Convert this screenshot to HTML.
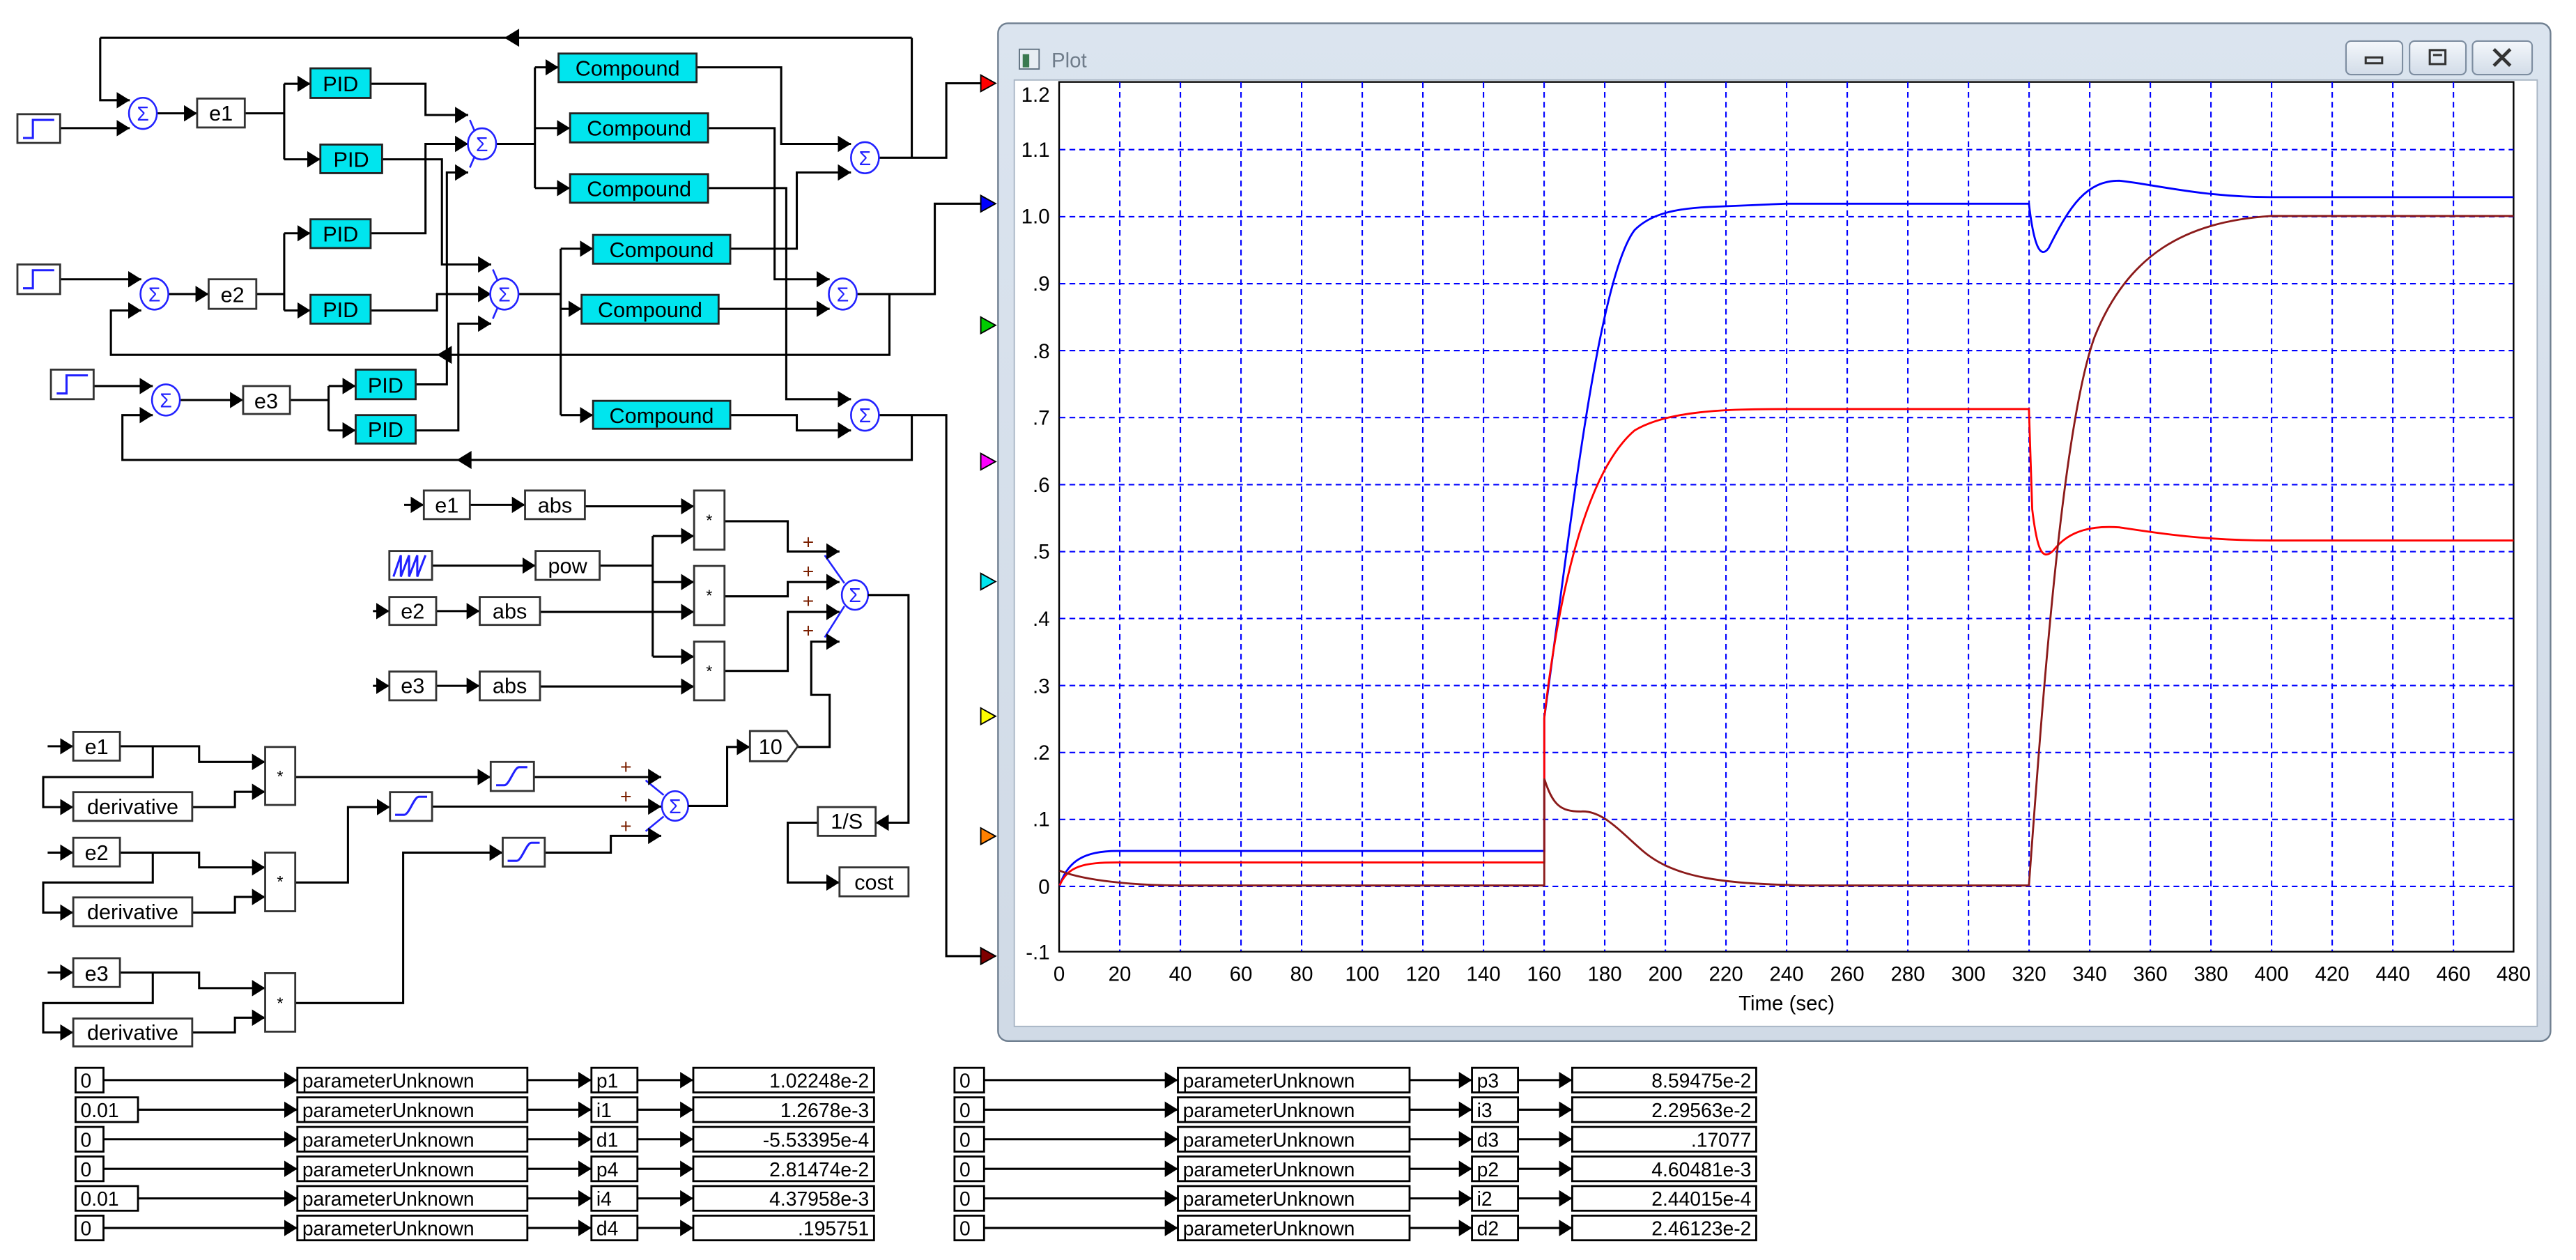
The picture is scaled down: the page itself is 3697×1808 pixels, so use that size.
<!DOCTYPE html>
<html><head><meta charset="utf-8"><style>
html,body{margin:0;padding:0;background:#fff;}
svg{display:block;}
text{font-family:"Liberation Sans",Arial,sans-serif;}
</style></head><body>
<svg width="3697" height="1808" viewBox="0 0 1568 767" preserveAspectRatio="none" xmlns="http://www.w3.org/2000/svg">
<defs>
<marker id="a" viewBox="0 0 8 10" refX="8" refY="5" markerWidth="8" markerHeight="10" markerUnits="userSpaceOnUse" orient="auto"><path d="M0,0 L8,5 L0,10z" fill="#000"/></marker>
<linearGradient id="fr" x1="0" y1="0" x2="0" y2="1"><stop offset="0" stop-color="#dbe4ef"/><stop offset="1" stop-color="#d0dae6"/></linearGradient>
<linearGradient id="bt" x1="0" y1="0" x2="0" y2="1"><stop offset="0" stop-color="#f4f7fb"/><stop offset="1" stop-color="#d2dce8"/></linearGradient>
</defs>
<rect width="1568" height="767" fill="#fff"/>

<g fill="none" stroke="#000" stroke-width="1.3">
<path d="M61,23 H555"/>
<path d="M61,23 V61 H79" marker-end="url(#a)"/>
<path d="M36.5,78 H79" marker-end="url(#a)"/>
<path d="M95.5,69 H120" marker-end="url(#a)"/>
<path d="M149,69 H173 M173,51 V97"/>
<path d="M173,51 H189" marker-end="url(#a)"/>
<path d="M173,97 H195" marker-end="url(#a)"/>
<path d="M225.6,51 H259 V70 H285" marker-end="url(#a)"/>
<path d="M232.6,97 H269 V161 H299" marker-end="url(#a)"/>
<path d="M225.6,142 H259 V87.6 H285" marker-end="url(#a)"/>
<path d="M225.6,189 H266 V179 H299" marker-end="url(#a)"/>
<path d="M253,234 H272 V105 H285" marker-end="url(#a)"/>
<path d="M253,262 H279 V197 H299" marker-end="url(#a)"/>
<path d="M302,87.6 H325.6 M325.6,41 V114.5"/>
<path d="M325.6,41 H340" marker-end="url(#a)"/>
<path d="M325.6,78 H347" marker-end="url(#a)"/>
<path d="M325.6,114.5 H347" marker-end="url(#a)"/>
<path d="M316,179 H341.3 M341.3,151.4 V252.7"/>
<path d="M341.3,151.4 H361" marker-end="url(#a)"/>
<path d="M341.3,188 H354" marker-end="url(#a)"/>
<path d="M341.3,252.7 H361" marker-end="url(#a)"/>
<path d="M424,41 H475.5 V87.6 H518" marker-end="url(#a)"/>
<path d="M431,78 H471.5 V170 H505" marker-end="url(#a)"/>
<path d="M431,114.5 H478.6 V243 H518" marker-end="url(#a)"/>
<path d="M444.5,151.4 H485 V105 H518" marker-end="url(#a)"/>
<path d="M437.4,188 H505" marker-end="url(#a)"/>
<path d="M444.5,252.7 H485 V262 H518" marker-end="url(#a)"/>
<path d="M535,96 H576 V50.7 H598"/>
<path d="M555,96 V23"/>
<path d="M521.5,179 H569 V124 H598"/>
<path d="M541.4,179 V216 H67.5 V189 H86" marker-end="url(#a)"/>
<path d="M535,252.7 H576 V582 H598"/>
<path d="M555,252.7 V280 H74.5 V252.7 H93" marker-end="url(#a)"/>
<path d="M36.5,170 H86" marker-end="url(#a)"/>
<path d="M102.5,179 H127" marker-end="url(#a)"/>
<path d="M156,179 H173 M173,142 V189"/>
<path d="M173,142 H189" marker-end="url(#a)"/>
<path d="M173,189 H189" marker-end="url(#a)"/>
<path d="M57,235 H93" marker-end="url(#a)"/>
<path d="M109.5,243.5 H148" marker-end="url(#a)"/>
<path d="M176.5,243.5 H200 M200,235 V262"/>
<path d="M200,235 H216.5" marker-end="url(#a)"/>
<path d="M200,262 H216.5" marker-end="url(#a)"/>
</g>
<g fill="#000">
<polygon points="307,23 316,17.5 316,28.5"/>
<polygon points="266,216 275,210.5 275,221.5"/>
<polygon points="278,280 287,274.5 287,285.5"/>
</g>

<g stroke="#333" stroke-width="1.2" fill="#fff">
<rect x="10.6" y="69.5" width="26" height="17.5"/>
<rect x="10.6" y="161" width="26" height="18"/>
<rect x="31" y="225" width="26" height="18"/>
<rect x="120" y="60" width="29" height="17.6"/>
<rect x="127" y="170" width="29" height="18"/>
<rect x="148" y="235" width="28.5" height="17"/>
</g>
<g fill="none" stroke="#2020ff" stroke-width="1.3">
<path d="M14,84 H20 V73 H33"/>
<path d="M14,175.5 H20 V164.5 H33"/>
<path d="M34.5,239.5 H40.5 V228.5 H53.5"/>
</g>
<g stroke="#222" stroke-width="1.2" fill="#00e5ee">
<rect x="189" y="41.6" width="36.6" height="18"/>
<rect x="195" y="88" width="37.6" height="17.4"/>
<rect x="189" y="133.5" width="36.6" height="17.5"/>
<rect x="189" y="179.5" width="36.6" height="17.5"/>
<rect x="216.5" y="225" width="36.5" height="18"/>
<rect x="216.5" y="252.7" width="36.5" height="17.3"/>
<rect x="340" y="32.6" width="84" height="17.4"/>
<rect x="347" y="69" width="84" height="17.7"/>
<rect x="347" y="106" width="84" height="17.4"/>
<rect x="361" y="143" width="83.5" height="17.5"/>
<rect x="354" y="179.5" width="83.4" height="17.5"/>
<rect x="361" y="244" width="83.5" height="17"/>
</g>
<g font-size="13" text-anchor="middle" fill="#000">
<text x="134.5" y="73.5">e1</text>
<text x="141.5" y="184">e2</text>
<text x="162" y="248.5">e3</text>
<text x="207.3" y="55.5">PID</text>
<text x="213.8" y="101.5">PID</text>
<text x="207.3" y="147">PID</text>
<text x="207.3" y="193">PID</text>
<text x="234.7" y="239">PID</text>
<text x="234.7" y="266">PID</text>
<text x="382" y="46">Compound</text>
<text x="389" y="82.5">Compound</text>
<text x="389" y="119.5">Compound</text>
<text x="402.7" y="156.5">Compound</text>
<text x="395.7" y="193">Compound</text>
<text x="402.7" y="257.5">Compound</text>
</g>
<g fill="#fff" stroke="#2222ff" stroke-width="1.1">
<ellipse cx="87" cy="69" rx="8.5" ry="9.5"/>
<ellipse cx="94" cy="179" rx="8.5" ry="9.5"/>
<ellipse cx="101" cy="243.5" rx="8.5" ry="9.5"/>
<ellipse cx="293.4" cy="87.6" rx="8.6" ry="9.5"/>
<ellipse cx="307" cy="179" rx="8.6" ry="9.5"/>
<ellipse cx="526.5" cy="96" rx="8.5" ry="9.5"/>
<ellipse cx="513" cy="179" rx="8.5" ry="9.5"/>
<ellipse cx="526.5" cy="252.7" rx="8.5" ry="9.5"/>
<ellipse cx="520.4" cy="362.2" rx="8" ry="9"/>
<ellipse cx="410.9" cy="490.6" rx="8" ry="9"/>
<path d="M286,73 L289,80 M286,102 L289,95 M300,164 L303,171 M300,194 L303,187 M502,338 L514,355 M502,388 L514,369 M393,475 L404,484 M393,506 L404,497" fill="none"/>
</g>
<g font-size="12" fill="#2222ff" text-anchor="middle">
<text x="87" y="73.5">Σ</text><text x="94" y="183.5">Σ</text><text x="101" y="248">Σ</text>
<text x="293.4" y="92">Σ</text><text x="307" y="183.5">Σ</text><text x="526.5" y="100.5">Σ</text>
<text x="513" y="183.5">Σ</text><text x="526.5" y="257">Σ</text><text x="520.4" y="366.5">Σ</text><text x="410.9" y="495">Σ</text>
</g>

<g stroke="#000" stroke-width="0.8">
<polygon points="597,45.7 606,50.7 597,55.7" fill="#ff0000"/>
<polygon points="597,119 606,124 597,129" fill="#0000ff"/>
<polygon points="597,193 606,198 597,203" fill="#00cc00"/>
<polygon points="597,276 606,281 597,286" fill="#ff00ff"/>
<polygon points="597,349 606,354 597,359" fill="#00e5ee"/>
<polygon points="597,431 606,436 597,441" fill="#ffff00"/>
<polygon points="597,504 606,509 597,514" fill="#ff8000"/>
<polygon points="597,577 606,582 597,587" fill="#800000"/>
</g>

<g fill="none" stroke="#000" stroke-width="1.3">
<path d="M246,307.3 H258" marker-end="url(#a)"/>
<path d="M286,307.3 H319.6" marker-end="url(#a)"/>
<path d="M356,308.2 H422.5" marker-end="url(#a)"/>
<path d="M263,344.3 H326" marker-end="url(#a)"/>
<path d="M365,344.3 H397.3 M397.3,326.3 V399.7"/>
<path d="M397.3,326.3 H422.5" marker-end="url(#a)"/>
<path d="M397.3,354.3 H422.5" marker-end="url(#a)"/>
<path d="M397.3,399.7 H422.5" marker-end="url(#a)"/>
<path d="M227,372 H237" marker-end="url(#a)"/>
<path d="M265.5,372 H292" marker-end="url(#a)"/>
<path d="M328.7,372.5 H422.5" marker-end="url(#a)"/>
<path d="M227,417.5 H237" marker-end="url(#a)"/>
<path d="M265.5,417.5 H292" marker-end="url(#a)"/>
<path d="M328.7,417.9 H422.5" marker-end="url(#a)"/>
<path d="M441,317.3 H479.5 V335.7 H511" marker-end="url(#a)"/>
<path d="M441,363 H479.5 V354.3 H511" marker-end="url(#a)"/>
<path d="M441,408.4 H479.5 V372.5 H511" marker-end="url(#a)"/>
<path d="M485.7,454.7 H505 V423 H493.8 V390.6 H511" marker-end="url(#a)"/>
<path d="M528.4,362.2 H553 V500.8 H533" marker-end="url(#a)"/>
<path d="M497.8,500.8 H479.5 V537.2 H511" marker-end="url(#a)"/>
<path d="M29,454.3 H44.6" marker-end="url(#a)"/>
<path d="M73,454.3 H121.2 V463.8 H161.4" marker-end="url(#a)"/>
<path d="M93,454.3 V473 H26.3 V491.3 H44.6" marker-end="url(#a)"/>
<path d="M117,491.3 H143 V482 H161.4" marker-end="url(#a)"/>
<path d="M179.7,473 H298.7" marker-end="url(#a)"/>
<path d="M325,473 H402.5" marker-end="url(#a)"/>
<path d="M29,519 H44.6" marker-end="url(#a)"/>
<path d="M73,519 H121.2 V528 H161.4" marker-end="url(#a)"/>
<path d="M93,519 V537.2 H26.3 V555.5 H44.6" marker-end="url(#a)"/>
<path d="M117,555.5 H143 V546 H161.4" marker-end="url(#a)"/>
<path d="M179.7,537.2 H211.8 V491.3 H237.4" marker-end="url(#a)"/>
<path d="M263,491 H402.5" marker-end="url(#a)"/>
<path d="M29,592 H44.6" marker-end="url(#a)"/>
<path d="M73,592 H121.2 V601.5 H161.4" marker-end="url(#a)"/>
<path d="M93,592 V610.6 H26.3 V628.5 H44.6" marker-end="url(#a)"/>
<path d="M117,628.5 H143 V619.5 H161.4" marker-end="url(#a)"/>
<path d="M179.7,610.6 H245.4 V519 H306" marker-end="url(#a)"/>
<path d="M331.6,519 H371.8 V508.8 H402.5" marker-end="url(#a)"/>
<path d="M419,490.6 H442.6 V454.7 H456.5" marker-end="url(#a)"/>
</g>
<g stroke="#333" stroke-width="1.2" fill="#fff">
<rect x="258" y="298.6" width="28" height="17.4"/>
<rect x="319.6" y="298.6" width="36.4" height="17.4"/>
<rect x="237" y="335.4" width="26" height="17.6"/>
<rect x="326" y="335.4" width="39" height="17.6"/>
<rect x="237" y="363.4" width="28.5" height="17"/>
<rect x="292" y="363.4" width="36.7" height="17"/>
<rect x="237" y="408.8" width="28.5" height="17.5"/>
<rect x="292" y="408.8" width="36.7" height="17.5"/>
<rect x="422.5" y="298.6" width="18.5" height="36"/>
<rect x="422.5" y="344.5" width="18.5" height="36"/>
<rect x="422.5" y="390.6" width="18.5" height="35.7"/>
<polygon points="456.5,445 479,445 485.7,454.2 479,463.4 456.5,463.4"/>
<rect x="497.8" y="491.3" width="35.2" height="17.5"/>
<rect x="511" y="528" width="42" height="17.6"/>
<rect x="44.6" y="445.6" width="28.4" height="17.4"/>
<rect x="44.6" y="482.2" width="72.4" height="17.5"/>
<rect x="161.4" y="454.7" width="18.3" height="35.3"/>
<rect x="298.7" y="463.8" width="26.3" height="17.7"/>
<rect x="44.6" y="510" width="28.4" height="17.4"/>
<rect x="44.6" y="546.3" width="72.4" height="17.5"/>
<rect x="161.4" y="519" width="18.3" height="35.7"/>
<rect x="237.4" y="482.2" width="25.6" height="17.5"/>
<rect x="44.6" y="583.3" width="28.4" height="17.5"/>
<rect x="44.6" y="620" width="72.4" height="17"/>
<rect x="161.4" y="592.4" width="18.3" height="35.6"/>
<rect x="306" y="510" width="25.6" height="17.5"/>
</g>
<g fill="none" stroke="#2020ff" stroke-width="1.3">
<path d="M239.5,351 L244,338 V351 L249,338 V351 L254,338 V351 L259,338"/>
<path d="M302,478 H307 C310,478 313,467 316,467 H321"/>
<path d="M240.5,496 H246 C249,496 252,485 255,485 H260"/>
<path d="M309,524 H314.5 C317.5,524 320.5,513 323.5,513 H328.5"/>
</g>
<g font-size="13" text-anchor="middle" fill="#000">
<text x="272" y="312">e1</text>
<text x="337.8" y="312">abs</text>
<text x="345.5" y="349">pow</text>
<text x="251.2" y="376.5">e2</text>
<text x="310.3" y="376.5">abs</text>
<text x="251.2" y="422">e3</text>
<text x="310.3" y="422">abs</text>
<text x="469" y="459">10</text>
<text x="515.4" y="504.5">1/S</text>
<text x="532" y="541.5">cost</text>
<text x="58.8" y="459">e1</text>
<text x="80.8" y="495.5">derivative</text>
<text x="58.8" y="523.5">e2</text>
<text x="80.8" y="559.5">derivative</text>
<text x="58.8" y="597">e3</text>
<text x="80.8" y="633">derivative</text>
</g>
<g font-size="10" text-anchor="middle" fill="#000">
<text x="431.7" y="320">*</text><text x="431.7" y="366">*</text><text x="431.7" y="412">*</text>
<text x="170.5" y="476">*</text><text x="170.5" y="540">*</text><text x="170.5" y="614">*</text>
</g>
<g font-size="12" fill="#7a1f00" text-anchor="middle">
<text x="492" y="334">+</text><text x="492" y="352">+</text><text x="492" y="370">+</text><text x="492" y="388">+</text>
<text x="381" y="471">+</text><text x="381" y="489">+</text><text x="381" y="507">+</text>
</g>

<g fill="none" stroke="#000" stroke-width="1.3">
<path d="M63,657.5 H181" marker-end="url(#a)"/><path d="M84,675.5 H181" marker-end="url(#a)"/><path d="M63,693.5 H181" marker-end="url(#a)"/>
<path d="M63,711.5 H181" marker-end="url(#a)"/><path d="M84,729.5 H181" marker-end="url(#a)"/><path d="M63,747.5 H181" marker-end="url(#a)"/>
<path d="M321,657.5 H360" marker-end="url(#a)"/><path d="M321,675.5 H360" marker-end="url(#a)"/><path d="M321,693.5 H360" marker-end="url(#a)"/>
<path d="M321,711.5 H360" marker-end="url(#a)"/><path d="M321,729.5 H360" marker-end="url(#a)"/><path d="M321,747.5 H360" marker-end="url(#a)"/>
<path d="M388,657.5 H422" marker-end="url(#a)"/><path d="M388,675.5 H422" marker-end="url(#a)"/><path d="M388,693.5 H422" marker-end="url(#a)"/>
<path d="M388,711.5 H422" marker-end="url(#a)"/><path d="M388,729.5 H422" marker-end="url(#a)"/><path d="M388,747.5 H422" marker-end="url(#a)"/>
<path d="M599,657.5 H717" marker-end="url(#a)"/><path d="M599,675.5 H717" marker-end="url(#a)"/><path d="M599,693.5 H717" marker-end="url(#a)"/>
<path d="M599,711.5 H717" marker-end="url(#a)"/><path d="M599,729.5 H717" marker-end="url(#a)"/><path d="M599,747.5 H717" marker-end="url(#a)"/>
<path d="M858,657.5 H896" marker-end="url(#a)"/><path d="M858,675.5 H896" marker-end="url(#a)"/><path d="M858,693.5 H896" marker-end="url(#a)"/>
<path d="M858,711.5 H896" marker-end="url(#a)"/><path d="M858,729.5 H896" marker-end="url(#a)"/><path d="M858,747.5 H896" marker-end="url(#a)"/>
<path d="M924,657.5 H957" marker-end="url(#a)"/><path d="M924,675.5 H957" marker-end="url(#a)"/><path d="M924,693.5 H957" marker-end="url(#a)"/>
<path d="M924,711.5 H957" marker-end="url(#a)"/><path d="M924,729.5 H957" marker-end="url(#a)"/><path d="M924,747.5 H957" marker-end="url(#a)"/>
</g>
<g stroke="#000" stroke-width="1.2" fill="#fff">
<rect x="46" y="650" width="17" height="15"/><rect x="46" y="668" width="38" height="15"/><rect x="46" y="686" width="17" height="15"/>
<rect x="46" y="704" width="17" height="15"/><rect x="46" y="722" width="38" height="15"/><rect x="46" y="740" width="17" height="15"/>
<rect x="181" y="650" width="140" height="15"/><rect x="181" y="668" width="140" height="15"/><rect x="181" y="686" width="140" height="15"/>
<rect x="181" y="704" width="140" height="15"/><rect x="181" y="722" width="140" height="15"/><rect x="181" y="740" width="140" height="15"/>
<rect x="360" y="650" width="28" height="15"/><rect x="360" y="668" width="28" height="15"/><rect x="360" y="686" width="28" height="15"/>
<rect x="360" y="704" width="28" height="15"/><rect x="360" y="722" width="28" height="15"/><rect x="360" y="740" width="28" height="15"/>
<rect x="422" y="650" width="110" height="15"/><rect x="422" y="668" width="110" height="15"/><rect x="422" y="686" width="110" height="15"/>
<rect x="422" y="704" width="110" height="15"/><rect x="422" y="722" width="110" height="15"/><rect x="422" y="740" width="110" height="15"/>
<rect x="581" y="650" width="18" height="15"/><rect x="581" y="668" width="18" height="15"/><rect x="581" y="686" width="18" height="15"/>
<rect x="581" y="704" width="18" height="15"/><rect x="581" y="722" width="18" height="15"/><rect x="581" y="740" width="18" height="15"/>
<rect x="717" y="650" width="141" height="15"/><rect x="717" y="668" width="141" height="15"/><rect x="717" y="686" width="141" height="15"/>
<rect x="717" y="704" width="141" height="15"/><rect x="717" y="722" width="141" height="15"/><rect x="717" y="740" width="141" height="15"/>
<rect x="896" y="650" width="28" height="15"/><rect x="896" y="668" width="28" height="15"/><rect x="896" y="686" width="28" height="15"/>
<rect x="896" y="704" width="28" height="15"/><rect x="896" y="722" width="28" height="15"/><rect x="896" y="740" width="28" height="15"/>
<rect x="957" y="650" width="112" height="15"/><rect x="957" y="668" width="112" height="15"/><rect x="957" y="686" width="112" height="15"/>
<rect x="957" y="704" width="112" height="15"/><rect x="957" y="722" width="112" height="15"/><rect x="957" y="740" width="112" height="15"/>
</g>
<g font-size="12" fill="#000">
<text x="49" y="662">0</text><text x="49" y="680">0.01</text><text x="49" y="698">0</text><text x="49" y="716">0</text><text x="49" y="734">0.01</text><text x="49" y="752">0</text>
<text x="184" y="662">parameterUnknown</text><text x="184" y="680">parameterUnknown</text><text x="184" y="698">parameterUnknown</text>
<text x="184" y="716">parameterUnknown</text><text x="184" y="734">parameterUnknown</text><text x="184" y="752">parameterUnknown</text>
<text x="363" y="662">p1</text><text x="363" y="680">i1</text><text x="363" y="698">d1</text><text x="363" y="716">p4</text><text x="363" y="734">i4</text><text x="363" y="752">d4</text>
<text x="584" y="662">0</text><text x="584" y="680">0</text><text x="584" y="698">0</text><text x="584" y="716">0</text><text x="584" y="734">0</text><text x="584" y="752">0</text>
<text x="720" y="662">parameterUnknown</text><text x="720" y="680">parameterUnknown</text><text x="720" y="698">parameterUnknown</text>
<text x="720" y="716">parameterUnknown</text><text x="720" y="734">parameterUnknown</text><text x="720" y="752">parameterUnknown</text>
<text x="899" y="662">p3</text><text x="899" y="680">i3</text><text x="899" y="698">d3</text><text x="899" y="716">p2</text><text x="899" y="734">i2</text><text x="899" y="752">d2</text>
</g>
<g font-size="12" fill="#000" text-anchor="end">
<text x="529" y="662">1.02248e-2</text><text x="529" y="680">1.2678e-3</text><text x="529" y="698">-5.53395e-4</text>
<text x="529" y="716">2.81474e-2</text><text x="529" y="734">4.37958e-3</text><text x="529" y="752">.195751</text>
<text x="1066" y="662">8.59475e-2</text><text x="1066" y="680">2.29563e-2</text><text x="1066" y="698">.17077</text>
<text x="1066" y="716">4.60481e-3</text><text x="1066" y="734">2.44015e-4</text><text x="1066" y="752">2.46123e-2</text>
</g>

<rect x="607.5" y="14.2" width="945" height="619.5" rx="6" fill="url(#fr)" stroke="#6f7f90" stroke-width="1"/>
<rect x="617.4" y="48.7" width="927" height="576.1" fill="#fff" stroke="#a8b5c4" stroke-width="0.8"/>
<rect x="620.5" y="30" width="12" height="12" fill="#e8eef3" stroke="#5f7080" stroke-width="0.8"/>
<rect x="622.5" y="33" width="4" height="8" fill="#3b7a50"/>
<text x="640" y="41" font-size="12.5" fill="#6f7c8a">Plot</text>
<g stroke="#7d8da0" stroke-width="0.9" fill="url(#bt)">
<rect x="1428" y="25" width="34.4" height="20.4" rx="3"/>
<rect x="1466.7" y="25" width="34.3" height="20.4" rx="3"/>
<rect x="1505" y="25" width="36.3" height="20.4" rx="3"/>
</g>
<g fill="none" stroke="#333" stroke-width="1.3">
<rect x="1440" y="35" width="10" height="3.5"/>
<rect x="1479" y="30.5" width="9.5" height="8.5"/>
<path d="M1481,33.5 H1486.5" />
<path d="M1518,30 L1528,40 M1528,30 L1518,40" stroke-width="2"/>
</g>

<rect x="644.7" y="49.9" width="885.3" height="529.4" fill="#fff" stroke="#000" stroke-width="1"/>
<g stroke="#0000ff" stroke-width="0.9" stroke-dasharray="3.5 2.5" fill="none">
<path d="M681.6,50 V579 M718.5,50 V579 M755.4,50 V579 M792.3,50 V579 M829.2,50 V579 M866.1,50 V579 M903,50 V579 M939.9,50 V579 M976.8,50 V579 M1013.7,50 V579 M1050.6,50 V579 M1087.5,50 V579 M1124.4,50 V579 M1161.3,50 V579 M1198.2,50 V579 M1235.1,50 V579 M1272,50 V579 M1308.9,50 V579 M1345.8,50 V579 M1382.7,50 V579 M1419.6,50 V579 M1456.5,50 V579 M1493.4,50 V579"/>
<path d="M645,539.6 H1530 M645,498.8 H1530 M645,458.1 H1530 M645,417.3 H1530 M645,376.5 H1530 M645,335.8 H1530 M645,295 H1530 M645,254.2 H1530 M645,213.4 H1530 M645,172.7 H1530 M645,131.9 H1530 M645,91.1 H1530"/>
</g>
<g font-size="12.5" fill="#000" text-anchor="end">
<text x="639" y="62">1.2</text><text x="639" y="95.5">1.1</text><text x="639" y="136">1.0</text><text x="639" y="177">.9</text>
<text x="639" y="218">.8</text><text x="639" y="258.5">.7</text><text x="639" y="299.5">.6</text><text x="639" y="340">.5</text>
<text x="639" y="381">.4</text><text x="639" y="422">.3</text><text x="639" y="462.5">.2</text><text x="639" y="503">.1</text>
<text x="639" y="544">0</text><text x="639" y="584">-.1</text>
</g>
<g font-size="12.5" fill="#000" text-anchor="middle">
<text x="644.7" y="597">0</text><text x="681.6" y="597">20</text><text x="718.5" y="597">40</text><text x="755.4" y="597">60</text>
<text x="792.3" y="597">80</text><text x="829.2" y="597">100</text><text x="866.1" y="597">120</text><text x="903" y="597">140</text>
<text x="939.9" y="597">160</text><text x="976.8" y="597">180</text><text x="1013.7" y="597">200</text><text x="1050.6" y="597">220</text>
<text x="1087.5" y="597">240</text><text x="1124.4" y="597">260</text><text x="1161.3" y="597">280</text><text x="1198.2" y="597">300</text>
<text x="1235.1" y="597">320</text><text x="1272" y="597">340</text><text x="1308.9" y="597">360</text><text x="1345.8" y="597">380</text>
<text x="1382.7" y="597">400</text><text x="1419.6" y="597">420</text><text x="1456.5" y="597">440</text><text x="1493.4" y="597">460</text>
<text x="1530" y="597">480</text>
<text x="1087.5" y="615">Time (sec)</text>
</g>
<g fill="none" stroke-width="1.2">
<path stroke="#0000ff" d="M645,539 C650,524 660,518 680,518 L940,518 L940,437 C955,330 972,170 995,140 C1005,130 1020,127 1040,126 L1087,124 L1235,124 C1238,150 1242,158 1247,151 C1260,125 1270,110 1290,110 C1310,112 1340,120 1382,120 L1530,120"/>
<path stroke="#ff0000" d="M645,539 C650,527 660,525 680,525 L940,525 L940,437 C950,350 968,285 995,262 C1015,250 1050,249 1087,249 L1235,249 L1237,310 C1240,335 1243,342 1250,335 C1260,322 1275,320 1290,321 C1310,324 1340,329 1382,329 L1530,329"/>
<path stroke="#8b1a1a" d="M645,530 C660,536 690,539 718,539 L940,539 L940,474 C945,490 950,494 962,494 C975,493 985,505 1000,518 C1020,535 1050,538 1100,539 L1235,539 C1243,430 1255,260 1275,205 C1295,155 1330,135 1382,131.5 L1530,131.5"/>
</g>
</svg>
</body></html>
